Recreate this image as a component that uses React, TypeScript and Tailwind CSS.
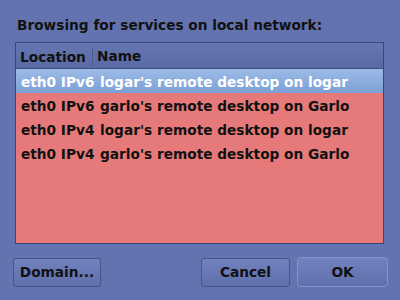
const rows = [
  { loc: "eth0 IPv6", name: "logar's remote desktop on logar", selected: true },
  { loc: "eth0 IPv6", name: "garlo's remote desktop on Garlo" },
  { loc: "eth0 IPv4", name: "logar's remote desktop on logar" },
  { loc: "eth0 IPv4", name: "garlo's remote desktop on Garlo" },
];

const btn =
  "h-[29px] rounded-[3px] border bg-gradient-to-b from-[#7282be] to-[#5f6fab] pt-[1px] text-[13.7px] font-bold text-[#111]";

export default function App() {
  return (
    <div className="flex h-[300px] w-[400px] flex-col bg-[#6373af] px-[15px] font-['DejaVu_Sans',sans-serif] text-[13.7px] font-bold text-[#111]">
      {/* Title */}
      <div className="pt-[15px] pb-[7px] pl-[2px] leading-[20px] whitespace-nowrap">
        Browsing for services on local network:
      </div>

      {/* List */}
      <div className="mr-[1px] flex h-[202px] flex-col border border-[#3a477a] bg-[#e67a7a]">
        <div className="flex h-[26px] items-center border-b border-[#3f4c7e] bg-gradient-to-b from-[#6676b2] to-[#5a6aa4] pt-[2px]">
          <div className="w-[77px] shrink-0 border-r border-[#4d5b90] pl-[4px] leading-[18px]">Location</div>
          <div className="pl-[4px]">Name</div>
        </div>
        {rows.map((r, i) => (
          <div
            key={i}
            className={
              r.selected
                ? "flex h-[24px] items-center bg-gradient-to-b from-[#9cbbe7] to-[#7d9fd5] pt-[2px] text-white"
                : "flex h-[24px] items-center pt-[2px]"
            }
          >
            <div className="w-[80px] shrink-0 pl-[5px] whitespace-nowrap">{r.loc}</div>
            <div className="pl-[4px] whitespace-nowrap">{r.name}</div>
          </div>
        ))}
      </div>

      {/* Buttons */}
      <div className="-mx-[2px] mt-[13px] flex items-center">
        <button className={`${btn} w-[88px] border-[#46548a]`}>Domain...</button>
        <div className="flex-1" />
        <button className={`${btn} w-[89px] border-[#46548a]`}>Cancel</button>
        <button className={`${btn} ml-[7px] h-[30px] w-[91px] rounded-[4px] border-[#8393cf] -mr-[1px]`}>OK</button>
      </div>
    </div>
  );
}
